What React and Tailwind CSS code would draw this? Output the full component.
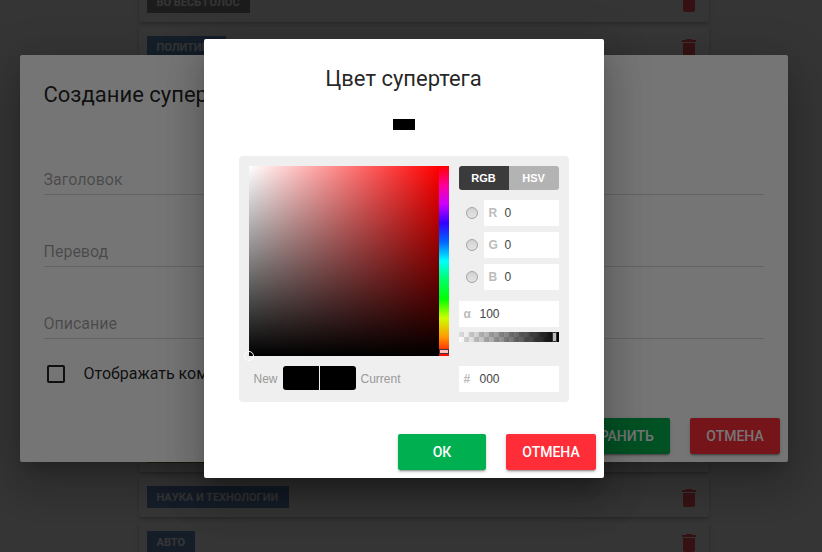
import React from "react";

function Trash() {
  return (
    <svg viewBox="0 0 24 24" className="mt-0.5 size-6 shrink-0 fill-[#ff5560]">
      <path d="M6 19c0 1.1.9 2 2 2h8c1.1 0 2-.9 2-2V7H6v12zM19 4h-3.500l-1-1h-5l-1 1H5v2h14V4z" />
    </svg>
  );
}

const rows = [
  { name: "ВО ВЕСЬ ГОЛОС", box: "w-[103px] bg-[#888888]" },
  { name: "ПОЛИТИКА", box: "w-[79px] bg-[#6597c8]" },
  { name: "ОБЩЕСТВО", box: "w-[82px] bg-[#6597c8]" },
  { name: "ЭКОНОМИКА", box: "w-[92px] bg-[#6597c8]" },
  { name: "КУЛЬТУРА", box: "w-[80px] bg-[#6597c8]" },
  { name: "СПОРТ", box: "w-[60px] bg-[#6597c8]" },
  { name: "ЗДОРОВЬЕ", box: "w-[82px] bg-[#6597c8]" },
  { name: "МИР", box: "w-[50px] bg-[#6597c8]" },
  { name: "ИСТОРИЯ", box: "w-[76px] bg-[#6597c8]" },
  { name: "ОБРАЗОВАНИЕ", box: "w-[102px] bg-[#6597c8]" },
  { name: "ЭКОЛОГИЯ", box: "w-[232px] bg-[#8fae4f]" },
  { name: "НАУКА И ТЕХНОЛОГИИ", box: "w-[142px] bg-[#658bc4]" },
  { name: "АВТО", box: "w-[48px] bg-[#658bc4]" },
];

function Page() {
  return (
    <div className="mr-auto ml-[139px] -mt-[18px] flex w-[570px] flex-col gap-[5px]">
      {rows.map((r) => (
        <div key={r.name} className="flex h-10 shrink-0 items-center justify-between rounded-[2px] bg-white px-2 shadow-[0_1px_5px_rgba(0,0,0,.14),0_2px_2px_rgba(0,0,0,.1)]">
          <div className={"flex h-[22px] items-center whitespace-nowrap pt-0.5 pl-[9.500px] text-[11px] font-bold text-white " + r.box}>
            {r.name}
          </div>
          <Trash />
        </div>
      ))}
    </div>
  );
}

function Button({ className, children }) {
  return (
    <button className={"h-9 rounded-[2px] text-[14px] font-medium text-white shadow-[0_3px_1px_-2px_rgba(0,0,0,.2),0_2px_2px_rgba(0,0,0,.14),0_1px_5px_rgba(0,0,0,.12)] " + className}>
      {children}
    </button>
  );
}

function CreateDialog() {
  return (
    <div className="flex h-[407px] w-[768px] flex-col rounded-[2px] bg-white px-6 text-black/87 shadow-[0_11px_15px_-7px_rgba(0,0,0,.2),0_24px_38px_3px_rgba(0,0,0,.14),0_9px_46px_8px_rgba(0,0,0,.12)]">
      <h2 className="mt-6 -ml-[0.5px] h-8 text-[22px] leading-8">Создание супертега</h2>
      {["Заголовок", "Перевод", "Описание"].map((t, i) => (
        <div key={t} className={"h-[30px] shrink-0 border-b border-black/15 text-[16px] leading-[30px] text-black/38 " + (i ? "mt-[42px]" : "mt-[54px]")}>
          <span className="-ml-[0.5px]">{t}</span>
        </div>
      ))}
      <label className="mt-[23px] flex h-6 items-center pl-[3px]">
        <span className="size-[18px] rounded-[2px] border-2 border-black/87" />
        <span className="ml-[18.500px] text-[16px]">Отображать комментарии</span>
      </label>
      <div className="-mr-4 mt-auto mb-2 flex justify-end gap-5">
        <Button className="w-[116px] bg-[#00b050] pl-[2px]">СОХРАНИТЬ</Button>
        <Button className="w-[90px] bg-[#ff2d38]">ОТМЕНА</Button>
      </div>
    </div>
  );
}

function Field({ label, value, className = "" }) {
  return (
    <div className={"flex h-[26px] items-center bg-white pl-[4.500px] text-[12px] " + className}>
      <span className="w-4 font-bold text-[#bbb]">{label}</span>
      <span className="text-[#444]">{value}</span>
    </div>
  );
}

function AlphaBar() {
  return (
    <div className="relative mt-[5px] h-[10px] w-[100px] bg-[repeating-conic-gradient(#fff_0_25%,#ddd_0_50%)] bg-[length:10px_10px] bg-[position:0_0]">
      <div className="h-full bg-linear-to-r from-transparent to-black" />
      <div className="absolute top-0 left-[93px] h-[10px] w-[5px] border border-[#333] bg-[#bbb]" />
    </div>
  );
}

function ColorPicker() {
  return (
    <div className="mx-auto h-[246px] w-[330px] rounded-[4px] bg-[#efefef] p-[10px] font-['Liberation_Sans',sans-serif]">
      <div className="flex gap-[10px]">
        <div className="flex h-[190px]">
          <div className="relative w-[190px] bg-[linear-gradient(to_bottom,transparent,#000),linear-gradient(to_right,#fff,#f00)]">
            <div className="absolute -bottom-[5px] -left-[5px] size-[10px] rounded-full border border-white" />
          </div>
          <div className="relative w-[10px] bg-[linear-gradient(to_bottom,#f00,#ff0099_10%,#cd00ff_20%,#3200ff_30%,#0066ff_40%,#00fffd_50%,#00ff66_60%,#0f0_70%,#cdff00_80%,#ff9900_90%,#f00)]">
            <div className="absolute top-[183px] h-[5px] w-[10px] border border-[#4a3336] bg-[#ffbcb8]" />
          </div>
        </div>
        <div className="w-[100px]">
          <div className="flex h-6 overflow-hidden rounded-[3px] text-center text-[11px] leading-6 font-bold text-white">
            <div className="w-1/2 bg-[#3b3b3b] pr-px">RGB</div>
            <div className="w-1/2 bg-[#b3b3b3] pr-px">HSV</div>
          </div>
          <div className="mt-[10px] flex flex-col gap-[6px]">
            {["R", "G", "B"].map((c) => (
              <div key={c} className="flex items-center">
                <span className="mr-[6px] ml-[7px] size-3 rounded-full border border-[#a3a3a3] bg-linear-to-b from-[#d2d2d2] to-[#e4e4e4]" />
                <Field label={c} value="0" className="flex-1" />
              </div>
            ))}
          </div>
          <Field label="α" value="100" className="mt-[11px]" />
          <AlphaBar />
        </div>
      </div>
      <div className="mt-[10px] flex items-start text-[12px] text-[#999]">
        <span className="w-[34px] pl-[4.500px] leading-[26px]">New</span>
        <div className="flex h-6 w-[73px] gap-px overflow-hidden rounded-[3px]">
          <div className="w-9 bg-black" />
          <div className="flex-1 bg-black" />
        </div>
        <span className="ml-[4.500px] leading-[26px]">Current</span>
        <Field label="#" value="000" className="ml-auto w-[100px]" />
      </div>
    </div>
  );
}

function ColorDialog() {
  return (
    <div className="flex h-[439px] w-[400px] flex-col rounded-[2px] bg-white text-black/87 shadow-[0_11px_15px_-7px_rgba(0,0,0,.2),0_24px_38px_3px_rgba(0,0,0,.14),0_9px_46px_8px_rgba(0,0,0,.12)]">
      <h2 className="mt-6 pr-px text-center text-[22px] leading-8">Цвет супертега</h2>
      <div className="mx-auto mt-6 mb-[26px] h-[11px] w-[22px] shrink-0 bg-black" />
      <ColorPicker />
      <div className="mt-auto mr-2 mb-2 flex justify-end gap-5">
        <Button className="w-[88px] bg-[#00b050]">ОК</Button>
        <Button className="w-[90px] bg-[#ff2d38]">ОТМЕНА</Button>
      </div>
    </div>
  );
}

export default function App() {
  return (
    <div className="relative h-[552px] w-[822px] overflow-hidden bg-[#fafafa] font-['Roboto',sans-serif]">
      <Page />
      <div className="absolute inset-0 bg-black/54 pt-[55px] pl-5">
        <CreateDialog />
      </div>
      <div className="absolute inset-0 flex justify-center bg-black/54 pt-[39px] pr-[14px]">
        <ColorDialog />
      </div>
    </div>
  );
}
